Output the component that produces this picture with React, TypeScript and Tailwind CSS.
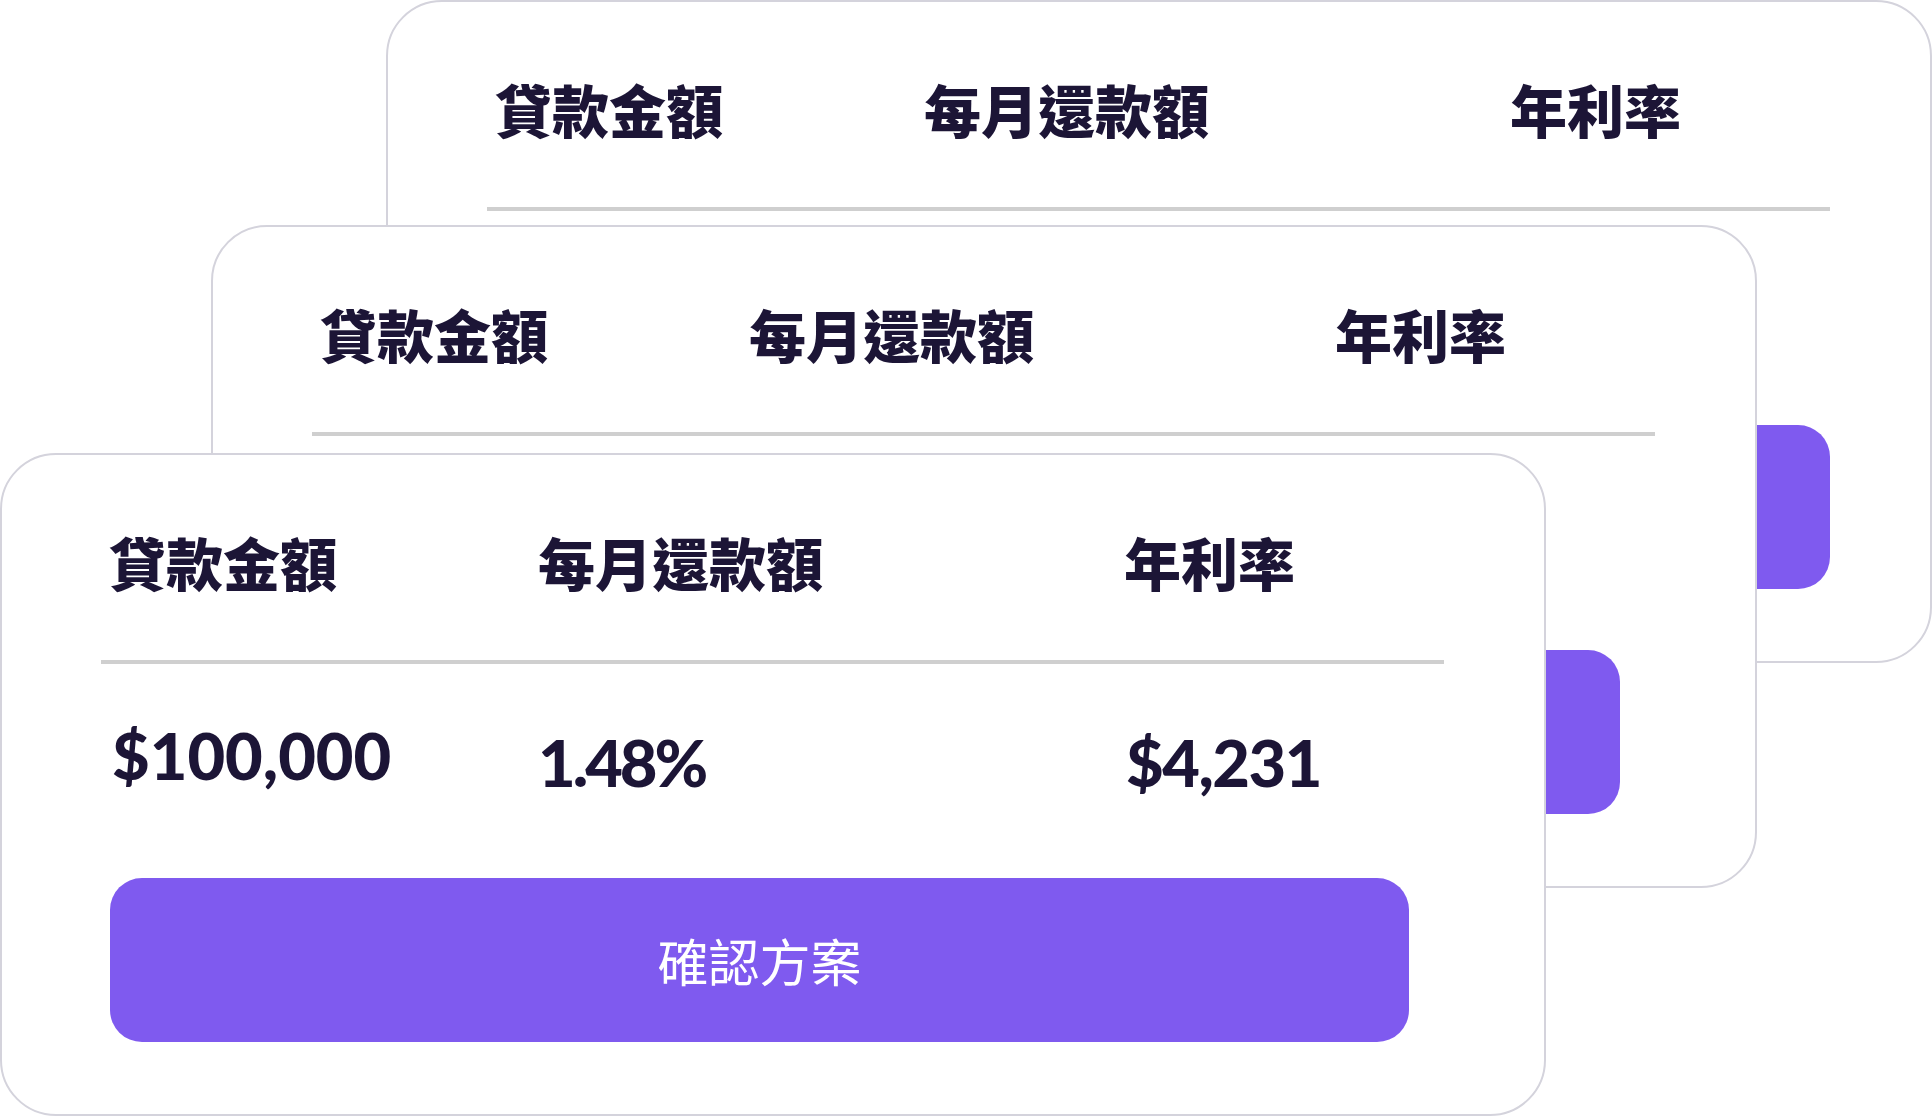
import React from 'react';

interface LoanCardProps {
  className: string;
  buttonWidth: string;
}

const headers = ['貸款金額', '每月還款額', '年利率'];

function LoanCard({ className, buttonWidth }: LoanCardProps) {
  return (
    <div
      className={`absolute w-[1546px] h-[663px] rounded-[56px] border-2 border-[#d4d3dc] bg-white flex flex-col ${className}`}
    >
      {/* 見出し */}
      <div className="flex pt-[78px] pl-[107px] font-['Noto_Sans_CJK_TC',sans-serif] font-black text-[57px] leading-[57px] text-[#1c1536]">
        <div className="w-[429px]">{headers[0]}</div>
        <div className="w-[586px]">{headers[1]}</div>
        <div>{headers[2]}</div>
      </div>

      <div className="ml-[99px] mt-[70px] w-[1343px] h-[4px] bg-[#cfcfcf]" />

      {/* 數值 */}
      <div className="flex items-start mt-[59px] pl-[110px] font-['Lato',sans-serif] font-black text-[65px] leading-[65px] text-[#1c1536]">
        <div className="w-[426px] tracking-[0px]">$100,000</div>
        <div className="w-[588px] pt-[7px] tracking-[-3px]">1.48%</div>
        <div className="pt-[7px] tracking-[-1.5px]">$4,231</div>
      </div>

      <button
        className={`ml-[108px] mt-[83px] h-[164px] ${buttonWidth} rounded-[32px] bg-[#7f5aef] flex items-center justify-center font-['Noto_Sans_CJK_TC',sans-serif] text-[51px] leading-none text-white`}
      >
        確認方案
      </button>
    </div>
  );
}

export default function App() {
  return (
    <div className="relative w-[1932px] h-[1117px] bg-white overflow-hidden">
      <LoanCard className="left-[386px] top-0" buttonWidth="w-[1334px]" />
      <LoanCard className="left-[211px] top-[225px]" buttonWidth="w-[1299px]" />
      <LoanCard className="left-0 top-[453px]" buttonWidth="w-[1299px]" />
    </div>
  );
}
